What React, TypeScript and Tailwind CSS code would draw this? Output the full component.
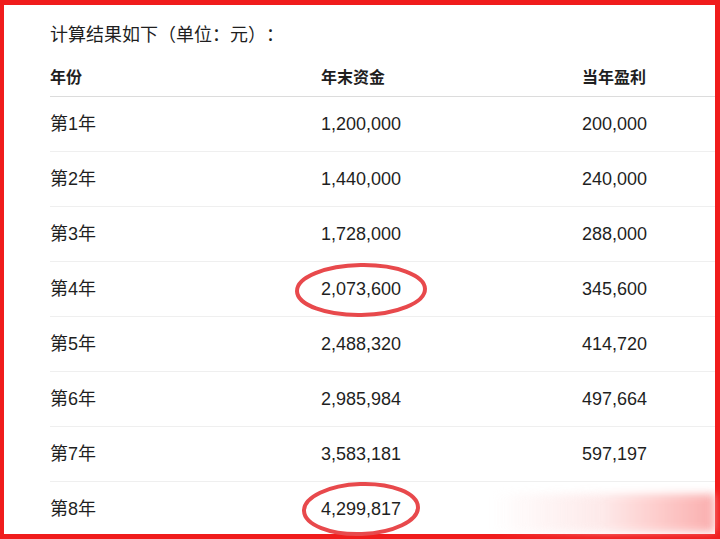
import React from 'react';

const rows = [
  ['第1年', '1,200,000', '200,000'],
  ['第2年', '1,440,000', '240,000'],
  ['第3年', '1,728,000', '288,000'],
  ['第4年', '2,073,600', '345,600'],
  ['第5年', '2,488,320', '414,720'],
  ['第6年', '2,985,984', '497,664'],
  ['第7年', '3,583,181', '597,197'],
  ['第8年', '4,299,817', ''],
];

const font = { fontFamily: '"Liberation Sans", "Noto Sans CJK SC", sans-serif' };
const cjk = { fontFamily: '"Noto Sans CJK SC", sans-serif' };

export default function App() {
  return (
    <div lang="zh-CN" className="relative w-[720px] h-[539px] bg-white overflow-hidden" style={font}>
      <div className="w-full h-full border-[#f01c1c] border-t-[5px] border-l-[4px] border-r-[5px] border-b-[5px] overflow-hidden pl-[46px] pt-[15px] text-[#1f1f1f]">
        <div className="text-[18px] leading-[26px] mb-[10px] [text-spacing-trim:space-all] [font-feature-settings:'fwid']" style={cjk}>
          计算结果如下（单位：元）：
        </div>
        <div className="grid grid-cols-[271px_261px_1fr] h-[41px] items-center border-b border-[#dcdcdc] text-[16px] font-semibold pt-[4px]">
          <div>年份</div>
          <div>年末资金</div>
          <div>当年盈利</div>
        </div>
        {rows.map((r) => (
          <div
            key={r[0]}
            className="grid grid-cols-[271px_261px_1fr] h-[55px] items-center border-b border-[#efefef] text-[18px] pt-[1px]"
          >
            <div>{r[0]}</div>
            <div>{r[1]}</div>
            <div>{r[2]}</div>
          </div>
        ))}
      </div>

      {/* watermark smear */}
      <div className="absolute left-[492px] top-[494px] w-[223px] h-[38px] bg-gradient-to-r from-transparent via-[#fde4e4] to-[#f99a9a] blur-[4px] opacity-80 pointer-events-none" />

      {/* hand-drawn circles */}
      <svg className="absolute inset-0 pointer-events-none" width="720" height="539">
        <ellipse cx="361" cy="290" rx="64" ry="25" fill="none" stroke="#e8494c" strokeWidth="4" transform="rotate(-1 361 290)" />
        <ellipse cx="361" cy="509" rx="57" ry="25" fill="none" stroke="#e8494c" strokeWidth="4" transform="rotate(-2 361 509)" />
      </svg>
    </div>
  );
}
